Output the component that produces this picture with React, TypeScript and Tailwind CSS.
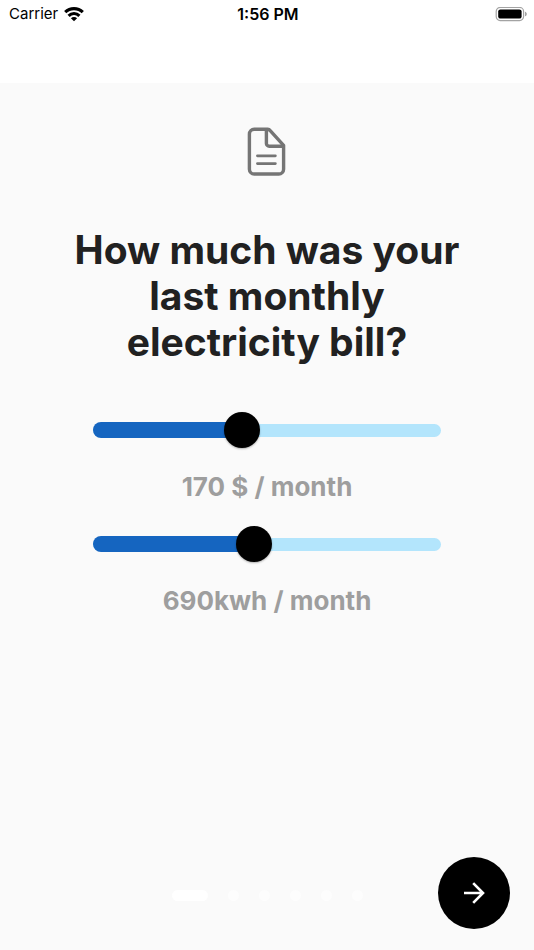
import React, { useState } from "react";

const WifiIcon = () => (
  <svg className="h-[15px] w-5" viewBox="0 0 20 15" fill="none" stroke="#000" strokeWidth="3.1" aria-hidden="true">
    <path d="M1.2 5.2a12.6 12.6 0 0 1 17.6 0" />
    <path d="M4.6 8.8a7.6 7.6 0 0 1 10.8 0" />
    <path d="M10 14.2 6.9 11.2a4.4 4.4 0 0 1 6.2 0Z" fill="#000" stroke="none" />
  </svg>
);

const BatteryIcon = () => (
  <svg className="h-[15px] w-8" viewBox="0 0 32 15" aria-hidden="true">
    <rect x="1.2" y="0.4" width="27.4" height="13.2" rx="4" fill="none" stroke="#a3a3a3" strokeWidth="1.2" />
    <rect x="3.2" y="2.4" width="23.4" height="9.2" rx="2.2" fill="#000" />
    <path d="M30 4.7c1.2.4 1.8 1.2 1.8 2.3s-.6 1.9-1.8 2.3Z" fill="#a3a3a3" />
  </svg>
);

const BillIcon = () => (
  <svg
    className="h-[50px] w-10"
    viewBox="0 0 40 50"
    fill="none"
    stroke="#757575"
    strokeWidth="3.4"
    strokeLinejoin="round"
    aria-hidden="true"
  >
    <path d="M20.6 2.2H7.2A4.8 4.8 0 0 0 2.4 7v35.2A4.8 4.8 0 0 0 7.2 47h24.6a4.8 4.8 0 0 0 4.8-4.8V18.4L23.2 3.6a3.6 3.6 0 0 0-2.6-1.4Z" />
    <path d="M19.4 3v13.4a2.8 2.8 0 0 0 2.8 2.8h14.2" />
    <path d="M10.4 28.8h18M10.4 36.6h18" strokeWidth="2.7" strokeLinecap="round" />
  </svg>
);

const ArrowIcon = () => (
  <svg className="h-6 w-6" viewBox="0 0 24 24" fill="none" stroke="#fff" strokeWidth="2.6" aria-hidden="true">
    <path d="M2 12h19.5M11.2 2.2 21 12l-9.8 9.8" />
  </svg>
);

type BillSliderProps = {
  id: string;
  name: string;
  value: number;
  max: number;
  unit: string;
  onChange: (value: number) => void;
};

const BillSlider = ({ id, name, value, max, unit, onChange }: BillSliderProps) => {
  const ratio = value / max;

  return (
    <div>
      <div className="grid items-center">
        <div className="col-start-1 row-start-1 h-[13px] rounded-full bg-[#b3e5fc]" />
        <div
          className="col-start-1 row-start-1 h-4 rounded-full bg-[#1565c0]"
          style={{ width: `calc(16px + ${ratio} * (100% - 16px))` }}
        />
        <input
          id={id}
          type="range"
          min={0}
          max={max}
          step={10}
          value={value}
          aria-label={name}
          onChange={(e) => onChange(Number(e.target.value))}
          className="z-10 col-start-1 row-start-1 -mx-[10px] h-9 cursor-pointer appearance-none bg-transparent [&::-webkit-slider-thumb]:h-9 [&::-webkit-slider-thumb]:w-9 [&::-webkit-slider-thumb]:appearance-none [&::-webkit-slider-thumb]:rounded-full [&::-webkit-slider-thumb]:bg-black [&::-webkit-slider-thumb]:shadow-[0_1px_2px_rgba(0,0,0,0.3)]"
        />
      </div>
      <output htmlFor={id} className="mt-5 block text-center text-[26px] leading-[38px] font-bold text-[#9e9e9e]">
        {value}
        {unit}
      </output>
    </div>
  );
};

const App = () => {
  const [cost, setCost] = useState(170);
  const [usage, setUsage] = useState(690);

  return (
    <div className="flex min-h-screen flex-col bg-[#fafafa] font-['Inter',sans-serif]">
      <header className="h-[83px] bg-white">
        <div className="grid h-7 grid-cols-3 items-center pr-[7px] pl-[9px] text-[15px] text-black">
          <div className="flex items-center gap-1.5">
            <span>Carrier</span>
            <WifiIcon />
          </div>
          <span className="text-center text-base font-semibold">1:56 PM</span>
          <div className="flex justify-end">
            <BatteryIcon />
          </div>
        </div>
      </header>

      <main className="flex flex-1 flex-col items-center pt-11">
        <BillIcon />
        <h1 className="mt-[50px] max-w-[420px] text-center text-[39px] leading-[46px] font-bold text-[#212121]">
          How much was your
          <br />
          last monthly
          <br />
          electricity bill?
        </h1>
        <div className="mt-[47px] flex w-full flex-col gap-5 px-[93px]">
          <BillSlider id="cost" name="Monthly cost" value={cost} max={400} unit=" $ / month" onChange={setCost} />
          <BillSlider id="usage" name="Monthly usage" value={usage} max={1500} unit="kwh / month" onChange={setUsage} />
        </div>
      </main>

      <footer className="grid grid-cols-[1fr_auto_1fr] items-center px-6 pb-[21px]">
        <div className="col-start-2 flex gap-5 pt-1">
          <span className="h-[11px] w-9 rounded-full bg-white" />
          <span className="h-[11px] w-[11px] rounded-full bg-[#fdfdfd]" />
          <span className="h-[11px] w-[11px] rounded-full bg-[#fdfdfd]" />
          <span className="h-[11px] w-[11px] rounded-full bg-[#fdfdfd]" />
          <span className="h-[11px] w-[11px] rounded-full bg-[#fdfdfd]" />
          <span className="h-[11px] w-[11px] rounded-full bg-[#fdfdfd]" />
        </div>
        <button
          type="button"
          aria-label="Next"
          className="flex h-[72px] w-[72px] cursor-pointer items-center justify-center justify-self-end rounded-full bg-black"
        >
          <ArrowIcon />
        </button>
      </footer>
    </div>
  );
};

export default App;
